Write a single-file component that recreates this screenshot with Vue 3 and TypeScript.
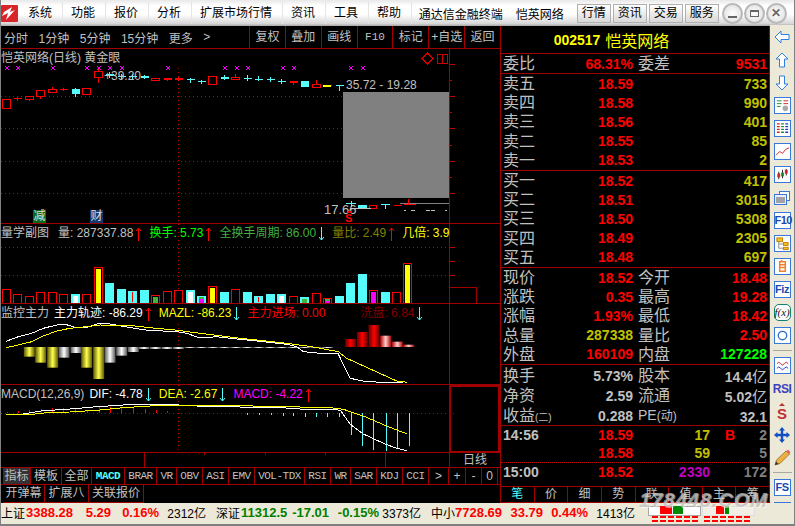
<script setup lang="ts">
type Kind = 'h' | 'r' | 'c'

interface Candle {
  kind: Kind
  top: number
  bottom: number
  high: number
  low: number
}

interface VolBar {
  top: number
  kind: 'h' | 'c'
  inner?: string
  accent?: string
}

const slot = (i: number) => Math.round(6 + i * 11.47) + 0.5

const menus = ['系统', '功能', '报价', '分析', '扩展市场行情', '资讯', '工具', '帮助']
const topTabs = ['行情', '资讯', '交易', '服务']
const periods = ['分时', '1分钟', '5分钟', '15分钟', '更多', '>']
const tools = ['复权', '叠加', '画线', 'F10', '标记', '+自选', '返回']

const raw: [Kind, number, number, number, number][] = [
  ['h', 99.5, 108.5, 99.5, 108.5], ['r', 98, 99, 97, 101], ['h', 96.5, 99.5, 96.5, 101], ['h', 90.5, 96.5, 90.5, 99],
  ['h', 89, 92.5, 87, 93], ['r', 89, 90, 88, 91], ['c', 88.5, 93.5, 87.5, 96.5], ['h', 88, 94, 88, 94],
  ['h', 71.5, 77.5, 69, 82.5], ['c', 74, 76, 71.5, 78], ['c', 76, 77, 74, 79.5], ['c', 76, 77, 74, 78.5],
  ['c', 76, 77.5, 74.5, 79], ['h', 78, 80.5, 78, 80.5], ['r', 78, 79.5, 78, 81], ['r', 78, 79.5, 76.5, 81],
  ['c', 79, 80, 77.5, 82.5], ['c', 81, 82, 80, 83.5], ['h', 76.5, 84.5, 76.5, 84.5], ['c', 76.5, 78.5, 75, 79.5],
  ['h', 77, 79.5, 74, 80], ['c', 77.5, 78.5, 75, 81], ['c', 79, 80, 76, 80.5], ['c', 79, 80, 77, 82],
  ['c', 81, 82, 79, 84], ['r', 81, 82.5, 81, 85], ['c', 81, 86.5, 81, 86.5], ['h', 84.5, 87, 80, 87],
  ['r', 84.5, 85.5, 84.5, 86], ['c', 84.5, 85.5, 84.5, 90.5]
]
const candles = raw.map(([kind, top, bottom, high, low]: [Kind, number, number, number, number], i: number) => ({
  x: slot(i),
  kind,
  top,
  bottom,
  high,
  low
} as Candle & { x: number }))

const crossXs = [7, 18, 53, 87, 99, 110, 122, 168, 225, 237, 248, 283, 294, 351, 363]

const volRaw: VolBar[] = [
  { top: 283, kind: 'h' }, { top: 298, kind: 'h' }, { top: 304, kind: 'h' }, { top: 292, kind: 'h' },
  { top: 292, kind: 'h' }, { top: 298, kind: 'h' }, { top: 298, kind: 'c', inner: '#fff' }, { top: 298, kind: 'h' },
  { top: 217, kind: 'h', inner: '#ff0' }, { top: 264, kind: 'c' }, { top: 282, kind: 'c' }, { top: 288, kind: 'c', inner: '#f00' },
  { top: 285, kind: 'c' }, { top: 301, kind: 'h', inner: '#3fb73f' }, { top: 289, kind: 'h' }, { top: 286, kind: 'h' },
  { top: 286, kind: 'c', inner: '#fff' }, { top: 303, kind: 'c', inner: '#f0f', accent: '#3fb73f' }, { top: 274, kind: 'h', inner: '#ff0' }, { top: 291, kind: 'c' },
  { top: 283, kind: 'h' }, { top: 291, kind: 'c' }, { top: 303, kind: 'c', inner: '#f00' }, { top: 297, kind: 'c' },
  { top: 297, kind: 'c', inner: '#fff' }, { top: 304, kind: 'h' }, { top: 306, kind: 'c', inner: '#3fb73f' }, { top: 295, kind: 'h' },
  { top: 310, kind: 'h', inner: '#f0f', accent: '#3fb73f' }, { top: 303, kind: 'c' }, { top: 264, kind: 'c' }, { top: 237, kind: 'c' },
  { top: 286, kind: 'h', inner: '#f0f' }, { top: 291, kind: 'c' }, { top: 292, kind: 'h' }, { top: 205, kind: 'h', inner: '#ff0' }
]
const volBars = volRaw.map((b: VolBar, i: number) => {
  const y = Math.round(b.top / 3 + 195)
  const thin = b.inner === '#f00'
  return { ...b, x: slot(i), y, h: 303 - y, thin }
})

const toPoints = (pts: number[][], base: number) =>
  pts.map(([x, y]: number[]) => `${(x / 3).toFixed(1)},${(y / 3 + base).toFixed(1)}`).join(' ')

const trackWhite = toPoints([[18, 124], [55, 110], [95, 100], [130, 85], [170, 75], [195, 73], [230, 83], [260, 82], [295, 71], [330, 72], [385, 82], [450, 92], [525, 94], [560, 100], [600, 114], [650, 110], [720, 118], [790, 125], [860, 133], [890, 140], [910, 155], [960, 160], [1015, 162], [1050, 235], [1090, 243], [1140, 247], [1210, 249]], 300)
const trackYellow = toPoints([[18, 143], [55, 135], [95, 125], [130, 108], [170, 93], [210, 85], [260, 80], [300, 75], [385, 76], [450, 83], [525, 90], [600, 100], [720, 115], [790, 122], [860, 130], [935, 140], [1015, 155], [1040, 175], [1190, 243], [1222, 247]], 300)

const flowDown: [number, number, string][] = [
  [88, 170, 'y'], [122, 188, 'y'], [158, 203, 'y'], [192, 173, 'w'], [228, 159, 'w'], [260, 203, 'y'], [296, 237, 'y'], [330, 188, 'w'], [365, 167, 'w'], [400, 156, 'w']
]
const flowBars = flowDown.map(([x, b, c]: [number, number, string]) => ({
  x: x / 3 - 5.5,
  h: b / 3 - 47,
  fill: c === 'y' ? 'url(#goldGrad)' : 'url(#silverGrad)'
}))
const flowThin = Array.from({ length: 17 }, (_: unknown, i: number) => ({ x: 144 + i * 11.47 - 5.5, h: i < 4 ? 2 : 1 }))
const flowUp: [number, number, string][] = [
  [1052, 117, 'r'], [1087, 96, 'r'], [1122, 75, 'r'], [1157, 107, 'p'], [1192, 125, 'p'], [1226, 134, 'p']
]
const flowUpBars = flowUp.map(([x, t, c]: [number, number, string]) => ({
  x: x / 3 - 5.5,
  y: t / 3 + 300,
  h: 47 - t / 3,
  fill: c === 'r' ? 'url(#redGrad)' : 'url(#pinkGrad)'
}))

const difLine = toPoints([[18, 345], [70, 342], [130, 332], [200, 328], [290, 320], [385, 314], [520, 314], [590, 318], [690, 318], [730, 322], [830, 322], [900, 327], [1000, 327], [1022, 332], [1050, 372], [1090, 402], [1155, 432], [1190, 445], [1222, 452]], 300)
const deaLine = toPoints([[18, 342], [105, 342], [140, 338], [210, 336], [300, 330], [370, 323], [450, 318], [590, 316], [830, 319], [1000, 324], [1030, 328], [1090, 348], [1155, 376], [1190, 390], [1222, 402]], 300)
const macdUp = [[20, 335], [54, 333], [88, 330], [122, 327], [156, 325], [190, 325], [225, 325], [260, 330], [296, 322], [330, 320], [364, 320], [400, 322], [435, 326], [468, 330], [502, 334]]
  .map(([x, y]: number[]) => ({ x: Math.round(x / 3) + 0.5, y: Math.round(y / 3 + 300) }))
const macdDown = [[742, 345], [778, 345], [812, 345], [848, 348], [880, 348], [914, 351], [948, 351], [982, 352], [1018, 352], [1052, 405], [1087, 438], [1120, 450], [1157, 452], [1190, 445], [1226, 438]]
  .map(([x, y]: number[]) => ({ x: Math.round(x / 3) + 0.5, y: Math.round(y / 3 + 300) }))

const mainTicks = [64, 80, 96, 112, 128, 145, 161, 177, 193]
const volTicks = [247, 261, 275]

const tabs = [
  { label: '指标', w: 28, cls: 'tab-on' }, { label: '模板', w: 31 }, { label: '全部', w: 30 }, { label: 'MACD', w: 33, cls: 'tab-mono tab-cyan' },
  { label: 'BRAR', w: 32, cls: 'tab-mono' }, { label: 'VR', w: 20, cls: 'tab-mono' }, { label: 'OBV', w: 26, cls: 'tab-mono' }, { label: 'ASI', w: 26, cls: 'tab-mono' },
  { label: 'EMV', w: 26, cls: 'tab-mono' }, { label: 'VOL-TDX', w: 50, cls: 'tab-mono' }, { label: 'RSI', w: 26, cls: 'tab-mono' }, { label: 'WR', w: 20, cls: 'tab-mono' },
  { label: 'SAR', w: 26, cls: 'tab-mono' }, { label: 'KDJ', w: 26, cls: 'tab-mono' }, { label: 'CCI', w: 26, cls: 'tab-mono' }, { label: '>', w: 20 },
  { label: '+', w: 17 }, { label: '-', w: 16 }, { label: '0', w: 16 }
]
const tabs2 = [{ label: '开弹幕', w: 42 }, { label: '扩展八', w: 44 }, { label: '关联报价', w: 55 }]

const sells = [['卖五', '18.59', '733'], ['卖四', '18.58', '990'], ['卖三', '18.56', '401'], ['卖二', '18.55', '85'], ['卖一', '18.53', '2']]
const buys = [['买一', '18.52', '417'], ['买二', '18.51', '3015'], ['买三', '18.50', '5308'], ['买四', '18.49', '2305'], ['买五', '18.48', '697']]

const stats = [
  { a: '现价', b: '18.52', bc: 'red', c: '今开', d: '18.48', dc: 'red' },
  { a: '涨跌', b: '0.35', bc: 'red', c: '最高', d: '19.28', dc: 'red' },
  { a: '涨幅', b: '1.93%', bc: 'red', c: '最低', d: '18.42', dc: 'red' },
  { a: '总量', b: '287338', bc: 'olive', c: '量比', d: '2.50', dc: 'red' },
  { a: '外盘', b: '160109', bc: 'red', c: '内盘', d: '127228', dc: 'green' }
]
const extras = [
  { a: '换手', aSub: '', b: '5.73%', c: '股本', cSub: '', d: '14.4', unit: '亿' },
  { a: '净资', aSub: '', b: '2.59', c: '流通', cSub: '', d: '5.02', unit: '亿' },
  { a: '收益', aSub: '(二)', b: '0.288', c: 'PE', cSub: '(动)', d: '32.1', unit: '' }
]
const quoteTabs = ['笔', '价', '细', '势', '联', '值', '主', '筹']
</script>

<template>
  <div class="window">
    <header class="menubar">
      <svg class="logo" width="17" height="17" viewBox="0 0 17 17">
        <rect width="17" height="17" rx="1" fill="#d8252a" />
        <path d="M1 11 L7 8 L5 15 L14 5 L9 7 L11 2 L3 7 Z" fill="#fff" />
      </svg>
      <span v-for="m in menus" :key="m" class="menu-item">{{ m }}</span>
      <span class="brand">通达信金融终端</span>
      <span class="brand-stock">恺英网络</span>
      <div class="top-tabs">
        <span v-for="t in topTabs" :key="t" class="top-tab">{{ t }}</span>
      </div>
      <div class="win-btns">
        <span class="win-btn"><i class="glyph-min"></i></span>
        <span class="win-btn"><i class="glyph-max"></i></span>
        <span class="win-btn glyph-close">✕</span>
      </div>
    </header>

    <div class="workspace">
      <section class="left">
        <div class="toolbar">
          <div class="periods">
            <span v-for="p in periods" :key="p" class="period">{{ p }}</span>
          </div>
          <span v-for="t in tools" :key="t" class="tool" :class="{ 'tool-mono': t === 'F10' }">{{ t }}</span>
        </div>

        <div class="pane pane-main">
          <div class="plot">
            <div class="pane-title">恺英网络(日线) 黄金眼</div>
            <svg class="canvas" viewBox="1 49 448 174" shape-rendering="crispEdges">
              <line x1="178.5" x2="178.5" y1="68" y2="223" class="dots" />
              <line v-for="y in [96.5, 128.5, 161.5, 193.5]" :key="y" x1="1" x2="343" :y1="y" :y2="y" class="dots" />
              <g v-for="x in crossXs" :key="x" stroke="#f0f">
                <line :x1="x - 2" :x2="x + 2" y1="66" y2="70" />
                <line :x1="x - 2" :x2="x + 2" y1="70" y2="66" />
              </g>
              <g v-for="c in candles" :key="c.x">
                <line :x1="c.x" :x2="c.x" :y1="c.high" :y2="c.low" :stroke="c.kind === 'c' ? '#54fcfc' : '#f00'" />
                <rect
                  :x="c.x - 4"
                  :y="c.top"
                  width="8"
                  :height="c.bottom - c.top"
                  :fill="c.kind === 'h' ? '#000' : c.kind === 'r' ? '#f00' : '#54fcfc'"
                  :stroke="c.kind === 'h' ? '#f00' : 'none'"
                />
              </g>
              <rect x="322.5" y="85" width="8" height="1.5" fill="#ff0" />
              <text x="104" y="80" class="label" fill="#c0c0c0">+39.20</text>
              <text x="346" y="89" class="label" fill="#c0c0c0">35.72 - 19.28</text>
              <rect x="343" y="92" width="106" height="106" fill="#808080" />
              <text x="324" y="214" class="label-lg" fill="#c0c0c0">17.66</text>
              <g stroke="#54fcfc">
                <line x1="346" x2="356" y1="203.5" y2="203.5" />
                <line x1="351.5" x2="351.5" y1="201" y2="207" />
                <line x1="381" x2="390" y1="204.5" y2="204.5" />
                <line x1="385.5" x2="385.5" y1="204" y2="209" />
              </g>
              <rect x="358" y="205" width="9" height="4" fill="#54fcfc" />
              <rect x="369.5" y="205.5" width="7" height="3" fill="none" stroke="#f00" />
              <line x1="400" x2="449" y1="203.5" y2="203.5" stroke="#808080" />
              <line x1="394" x2="402" y1="205.5" y2="205.5" stroke="#f00" />
              <line x1="404" x2="416" y1="204.5" y2="204.5" stroke="#f00" />
              <line x1="408.5" x2="408.5" y1="199" y2="204" stroke="#f00" />
              <line x1="350" x2="371" y1="208.5" y2="208.5" stroke="#c0c0c0" />
              <path d="M404 210.5h2M411 210.5h4M426 210.5h4M431 210.5h4M445 210.5h2" stroke="#c0c0c0" />
              <path d="M349.5 209 L347 213 H352 Z" fill="#f00" />
              <text x="345" y="222" class="sell-mark" fill="#f00">S</text>
              <path d="M422 58.5 L427.5 53 L433 58.5 L427.5 64 Z M437.5 54.5 H447 V63.5 H437.5 Z M442.5 54.5 V63.5" fill="none" stroke="#c00" />
            </svg>
            <span class="news-tag tag-green">减</span>
            <span class="news-tag tag-blue">财</span>
          </div>
          <div class="axis">
            <i v-for="(y, i) in mainTicks" :key="y" class="tick" :class="{ long: i % 2 === 0 }" :style="{ top: y - 49 + 'px' }"></i>
          </div>
        </div>

        <div class="pane pane-vol">
          <div class="plot">
            <div class="pane-title">
              <span class="t-gray">量学副图</span>
              <span class="t-gray gap wide">量: 287337.88</span>
              <svg class="arr up" width="11" height="14" viewBox="0 0 11 14"><path d="M5.5 1 V14 M3 4 L5.5 1 L8 4" /></svg>
              <span class="t-lime gap">换手: 5.73</span>
              <svg class="arr up" width="11" height="14" viewBox="0 0 11 14"><path d="M5.5 1 V14 M3 4 L5.5 1 L8 4" /></svg>
              <span class="t-green gap">全换手周期: 86.00</span>
              <svg class="arr down" width="11" height="14" viewBox="0 0 11 14"><path d="M5.5 0 V13 M3 10 L5.5 13 L8 10" /></svg>
              <span class="t-olive gap">量比: 2.49</span>
              <svg class="arr up" width="11" height="14" viewBox="0 0 11 14"><path d="M5.5 1 V14 M3 4 L5.5 1 L8 4" /></svg>
              <span class="t-yellow gap">几倍: 3.9</span>
            </div>
            <svg class="canvas" viewBox="1 224 448 79" shape-rendering="crispEdges">
              <line x1="178.5" x2="178.5" y1="224" y2="303" class="dots" />
              <line v-for="y in [247.5, 275.5]" :key="y" x1="1" x2="449" :y1="y" :y2="y" class="dots" />
              <g v-for="b in volBars" :key="b.x">
                <rect v-if="b.kind === 'c'" :x="b.x - 4.5" :y="b.y" width="9" :height="b.h" fill="#54fcfc" />
                <rect v-else :x="b.x - 4" :y="b.y + 0.5" width="8" :height="b.h - 0.5" fill="#000" stroke="#f00" />
                <template v-if="b.inner">
                  <line v-if="b.thin" :x1="b.x" :x2="b.x" :y1="b.y + 1" y2="302" stroke="#f00" />
                  <template v-else-if="b.accent">
                    <rect :x="b.x - 2.5" :y="b.y + 1" width="5" height="2" :fill="b.accent" />
                    <rect :x="b.x - 2.5" :y="b.y + 3" width="5" :height="b.h - 3" :fill="b.inner" />
                  </template>
                  <rect v-else :x="b.x - 2.5" :y="b.y + 2" width="5" :height="b.h - 2" :fill="b.inner" />
                </template>
              </g>
            </svg>
          </div>
          <div class="axis">
            <i v-for="y in volTicks" :key="y" class="tick long" :style="{ top: y - 224 + 'px' }"></i>
            <i class="vol-box"></i>
          </div>
        </div>

        <div class="pane pane-monitor">
          <div class="plot">
            <div class="pane-title">
              <span class="t-gray">监控主力</span>
              <span class="t-white gap">主力轨迹: -86.29</span>
              <svg class="arr up" width="11" height="14" viewBox="0 0 11 14"><path d="M5.5 1 V14 M3 4 L5.5 1 L8 4" /></svg>
              <span class="t-yellow gap">MAZL: -86.23</span>
              <svg class="arr down" width="11" height="14" viewBox="0 0 11 14"><path d="M5.5 0 V13 M3 10 L5.5 13 L8 10" /></svg>
              <span class="t-red gap">主力进场: 0.00</span>
              <span class="t-dark gap wash">洗盘: 6.84</span>
              <svg class="arr down" width="11" height="14" viewBox="0 0 11 14"><path d="M5.5 0 V13 M3 10 L5.5 13 L8 10" /></svg>
            </div>
            <svg class="canvas" viewBox="1 304 448 80">
              <defs>
                <linearGradient id="goldGrad"><stop offset="0" stop-color="#5c5800" /><stop offset=".5" stop-color="#ffff50" /><stop offset="1" stop-color="#5c5800" /></linearGradient>
                <linearGradient id="silverGrad"><stop offset="0" stop-color="#555" /><stop offset=".5" stop-color="#fff" /><stop offset="1" stop-color="#555" /></linearGradient>
                <linearGradient id="redGrad"><stop offset="0" stop-color="#600" /><stop offset=".5" stop-color="#f00" /><stop offset="1" stop-color="#600" /></linearGradient>
                <linearGradient id="pinkGrad"><stop offset="0" stop-color="#a00" /><stop offset=".5" stop-color="#fcc" /><stop offset="1" stop-color="#a00" /></linearGradient>
              </defs>
              <line x1="178.5" x2="178.5" y1="324" y2="384" class="dots" shape-rendering="crispEdges" />
              <rect v-for="(b, i) in flowBars" :key="i" :x="b.x" y="347" width="11" :height="b.h" :fill="b.fill" />
              <rect v-for="(b, i) in flowThin" :key="'t' + i" :x="b.x" y="347" width="11" :height="b.h" fill="url(#silverGrad)" />
              <rect v-for="(b, i) in flowUpBars" :key="'u' + i" :x="b.x" :y="b.y" width="11" :height="b.h" :fill="b.fill" />
              <polyline :points="trackWhite" class="curve" stroke="#fff" shape-rendering="crispEdges" />
              <polyline :points="trackYellow" class="curve" stroke="#ff0" shape-rendering="crispEdges" />
            </svg>
          </div>
          <div class="axis"></div>
        </div>

        <div class="pane pane-macd">
          <div class="plot">
            <div class="pane-title">
              <span class="t-gray">MACD(12,26,9)</span>
              <span class="t-white gap">DIF: -4.78</span>
              <svg class="arr down" width="11" height="14" viewBox="0 0 11 14"><path d="M5.5 0 V13 M3 10 L5.5 13 L8 10" /></svg>
              <span class="t-yellow gap">DEA: -2.67</span>
              <svg class="arr down" width="11" height="14" viewBox="0 0 11 14"><path d="M5.5 0 V13 M3 10 L5.5 13 L8 10" /></svg>
              <span class="t-magenta gap">MACD: -4.22</span>
              <svg class="arr up" width="11" height="14" viewBox="0 0 11 14"><path d="M5.5 1 V14 M3 4 L5.5 1 L8 4" /></svg>
            </div>
            <svg class="canvas macd-canvas" viewBox="1 385 448 67" shape-rendering="crispEdges">
              <line x1="178.5" x2="178.5" y1="385" y2="450" class="dots" />
              <line x1="1" x2="455" y1="413.5" y2="413.5" class="dots" />
              <line v-for="m in macdUp" :key="m.x" :x1="m.x" :x2="m.x" :y1="m.y" y2="413" stroke="#f00" />
              <line v-for="m in macdDown" :key="m.x" :x1="m.x" :x2="m.x" y1="413" :y2="m.y" stroke="#54fcfc" />
              <polyline :points="difLine" class="curve" stroke="#fff" />
              <polyline :points="deaLine" class="curve" stroke="#ff0" />
            </svg>
          </div>
          <div class="axis axis-active"></div>
        </div>

        <div class="date-axis">
          <div class="date-track">
            <i style="left: 143px"></i>
            <i class="short" style="left: 203px"></i>
            <i class="short" style="left: 264px"></i>
            <i class="short" style="left: 324px"></i>
            <i style="left: 384px"></i>
          </div>
          <span class="date-unit">日线</span>
        </div>

        <div class="tab-row">
          <span
            v-for="t in tabs"
            :key="t.label"
            class="tab"
            :class="t.cls"
            :style="{ width: t.w + 'px' }"
          >{{ t.label }}</span>
        </div>
        <div class="tab-row tab-row2">
          <span v-for="t in tabs2" :key="t.label" class="tab" :style="{ width: t.w + 'px' }">{{ t.label }}</span>
        </div>
      </section>

      <aside class="quote">
        <div class="q-head"><b>002517</b> <span>恺英网络</span></div>
        <div class="q-sec q-ratio">
          <div class="q-row">
            <span class="cn">委比</span><b class="num red">68.31%</b><span class="cn c2">委差</span><b class="num red">9531</b>
          </div>
        </div>
        <div class="q-sec q-book">
          <div v-for="r in sells" :key="r[0]" class="q-row">
            <span class="cn">{{ r[0] }}</span><b class="num red">{{ r[1] }}</b><span></span><b class="num olive">{{ r[2] }}</b>
          </div>
        </div>
        <div class="q-sec q-book">
          <div v-for="r in buys" :key="r[0]" class="q-row">
            <span class="cn">{{ r[0] }}</span><b class="num red">{{ r[1] }}</b><span></span><b class="num olive">{{ r[2] }}</b>
          </div>
        </div>
        <div class="q-sec q-book">
          <div v-for="r in stats" :key="r.a" class="q-row">
            <span class="cn">{{ r.a }}</span><b class="num" :class="r.bc">{{ r.b }}</b>
            <span class="cn c2">{{ r.c }}</span><b class="num" :class="r.dc">{{ r.d }}</b>
          </div>
        </div>
        <div class="q-sec q-extra">
          <div v-for="r in extras" :key="r.a" class="q-row">
            <span class="cn nowrap">{{ r.a }}<small class="sub-a">{{ r.aSub }}</small></span><b class="num gray">{{ r.b }}</b>
            <span class="cn c2 nowrap" :class="{ 'pe-label': r.c === 'PE' }">{{ r.c }}<small class="sub-c">{{ r.cSub }}</small></span><b class="num gray">{{ r.d }}<span class="cn unit">{{ r.unit }}</span></b>
          </div>
        </div>
        <div class="q-ticks">
          <div class="tick-row"><b class="gray t-time">14:56</b><b class="red t-price">18.59</b><b class="olive t-vol">17</b><b class="red t-side">B</b><b class="dim t-n">2</b></div>
          <div class="tick-row tick-dotted"><b class="t-time"></b><b class="red t-price">18.58</b><b class="olive t-vol">59</b><b class="t-side"></b><b class="dim t-n">5</b></div>
          <div class="tick-row"><b class="gray t-time">15:00</b><b class="red t-price">18.52</b><b class="purple t-vol">2330</b><b class="t-side"></b><b class="dim t-n">172</b></div>
        </div>
        <div class="q-tabs">
          <span v-for="(t, i) in quoteTabs" :key="t" class="q-tab" :class="{ active: i === 0 }">{{ t }}</span>
        </div>
      </aside>

      <nav class="side">
        <span class="ic"><svg width="16" height="14" viewBox="0 0 16 14"><path d="M1 7 L7 1 V4.5 H15 V9.5 H7 V13 Z" fill="#fff" stroke="#2f7fe0" /></svg></span>
        <span class="ic"><svg width="14" height="16" viewBox="0 0 14 16"><path d="M7 1 L13 7 H9.5 V15 H4.5 V7 H1 Z" fill="#fff" stroke="#2f7fe0" /></svg></span>
        <span class="ic"><svg width="14" height="16" viewBox="0 0 14 16"><path d="M7 15 L13 9 H9.5 V1 H4.5 V9 H1 Z" fill="#fff" stroke="#2f7fe0" /></svg></span>
        <span class="ic"><svg class="box" width="16" height="16" viewBox="0 0 16 16"><path d="M2 3H7M2 6H7M2 9H6" stroke="#1a8a30" /><path d="M9 3H14M9 6H14" stroke="#d02020" /><circle cx="11" cy="11" r="3" fill="#aaa" /></svg></span>
        <span class="ic"><svg class="box" width="16" height="16" viewBox="0 0 16 16"><path d="M2 3H5M2 6H5M2 9H5M2 12H5" stroke="#d02020" stroke-width="1.4" /><path d="M6.5 3H9.5M6.5 6H9.5M6.5 9H9.5M6.5 12H9.5" stroke="#1a8a30" stroke-width="1.4" /><path d="M11 3H14M11 6H14M11 9H14M11 12H14" stroke="#1a3ad0" stroke-width="1.4" /></svg></span>
        <span class="ic"><svg class="box" width="16" height="16" viewBox="0 0 16 16"><path d="M1 12 L5 8 L8 10 L11 6 L15 4" fill="none" stroke="#d02020" /></svg></span>
        <span class="ic"><svg class="box" width="16" height="16" viewBox="0 0 16 16"><path d="M4 5V13M8 3V12M12 2V9" stroke="#222" /><rect x="2.5" y="7" width="3" height="4" fill="#d02020" /><rect x="6.5" y="6" width="3" height="4" fill="#1a8a30" /><rect x="10.5" y="3" width="3" height="4" fill="#d02020" /></svg></span>
        <span class="ic"><svg width="16" height="16" viewBox="0 0 16 16"><rect x="5.5" y="1.5" width="10" height="9" fill="#fff" stroke="#3a78d8" /><rect x="0.5" y="4.5" width="12" height="10" fill="#eef" stroke="#3a78d8" /><path d="M2 8H11M2 10H11M2 12H11" stroke="#555" /></svg></span>
        <span class="ic"><span class="box txt-ic">F10</span></span>
        <span class="ic"><svg class="box" width="16" height="16" viewBox="0 0 16 16"><rect x="2" y="2" width="6" height="4" fill="#f0c020" stroke="#c08000" /><rect x="9" y="7" width="5" height="3" fill="#f0c020" stroke="#c08000" /><rect x="9" y="12" width="5" height="2.5" fill="#f0c020" stroke="#c08000" /><path d="M4 6V13H9M4 8.5H9" fill="none" stroke="#888" /></svg></span>
        <span class="ic"><svg class="box" width="16" height="16" viewBox="0 0 16 16"><path d="M5 3H11V13H5ZM5 6H11M5 9H11M7 1V3" fill="none" stroke="#f08030" stroke-width="1.6" /></svg></span>
        <span class="ic"><span class="box txt-ic">Fiz</span></span>
        <span class="ic"><span class="box box-teal txt-fx">f(x)</span></span>
        <span class="ic"><svg class="box" width="16" height="16" viewBox="0 0 16 16"><circle cx="8" cy="8" r="4.5" fill="none" stroke="#2f6fd0" stroke-width="1.4" /></svg></span>
        <i class="side-sep"></i>
        <span class="ic"><svg class="box" width="16" height="16" viewBox="0 0 16 16"><path d="M2 6 Q4 3 6 6 T10 6 T14 6" fill="none" stroke="#d02020" /><path d="M2 11 Q4 8 6 11 T10 11 T14 11" fill="none" stroke="#2030d0" /></svg></span>
        <span class="ic"><b class="rsi">RSI</b></span>
        <span class="ic ic-s-wrap"><b class="ic-s">S</b></span>
        <span class="ic"><svg width="18" height="18" viewBox="0 0 18 18"><path d="M9 1 L12 4.5 H10.2 V7.8 H13.5 V6 L17 9 L13.5 12 V10.2 H10.2 V13.5 H12 L9 17 L6 13.5 H7.8 V10.2 H4.5 V12 L1 9 L4.5 6 V7.8 H7.8 V4.5 H6 Z" fill="#1050c0" /></svg></span>
        <span class="ic"><svg width="17" height="17" viewBox="0 0 17 17"><path d="M1 16 L2.5 11 L12 2 L15.5 5 L6 14.5 Z" fill="#f0b040" stroke="#806020" stroke-width=".7" /><path d="M12 2 L14 0.8 L16.4 3 L15.5 5 Z" fill="#e06070" /><path d="M1 16 L2 12.5 L4.5 15 Z" fill="#333" /></svg></span>
        <i class="side-sep"></i>
        <span class="ic"><span class="box txt-ic">FS</span></span>
        <span class="ic"><svg class="box" width="16" height="16" viewBox="0 0 16 16"><path d="M3 8 A5 5 0 0 1 12 5 L13.5 3.5 V8 H9 L11 6 A3.5 3.5 0 0 0 5 8 Z" fill="#38a838" /><path d="M13 9 A5 5 0 0 1 4 12 L2.5 13.5 V9 H7 L5 11 A3.5 3.5 0 0 0 11 9 Z" fill="#60b860" /></svg></span>
      </nav>
    </div>

    <footer class="status">
      <span class="s-cn" style="width: 25px">上证</span>
      <b class="s-num red" style="width: 49px">3388.28</b>
      <b class="s-num red s-right" style="width: 36px">5.29</b>
      <b class="s-num red s-right" style="width: 48px">0.16%</b>
      <span class="s-amt" style="width: 47px">2312亿</span>
      <span class="s-cn" style="width: 25px">深证</span>
      <b class="s-num dkgreen" style="width: 47px">11312.5</b>
      <b class="s-num dkgreen s-right" style="width: 41px">-17.01</b>
      <b class="s-num dkgreen s-right" style="width: 50px">-0.15%</b>
      <span class="s-amt" style="width: 42px">3373亿</span>
      <span class="s-cn" style="width: 24px">中小</span>
      <b class="s-num red" style="width: 49px">7728.69</b>
      <b class="s-num red s-right" style="width: 39px">33.79</b>
      <b class="s-num red s-right" style="width: 45px">0.44%</b>
      <span class="s-amt" style="width: 47px">1413亿</span>
      <svg class="meter" width="120" height="21" viewBox="0 0 120 21" shape-rendering="crispEdges">
        <rect x="3.5" y="4.5" width="52" height="9" fill="#fff" stroke="#aaa" />
        <rect x="57.5" y="4.5" width="52" height="9" fill="#f2f0e6" stroke="#ddd" />
        <rect x="15" y="4" width="12" height="8" fill="#f00" />
        <rect x="28" y="4" width="10" height="8" fill="#080" />
        <rect x="71" y="4" width="8" height="8" fill="#f00" />
        <rect x="80" y="4" width="4" height="8" fill="#080" />
        <path d="M7 14.5H53M7 18.5H53M59 14.5H105M59 18.5H105" stroke="#f00" stroke-width="2" stroke-dasharray="6 2" />
      </svg>
    </footer>
    <div class="watermark">178448.COM</div>
  </div>
</template>

<style>
html,
body {
  margin: 0;
  background: #000;
}
</style>

<style scoped>
.window {
  position: relative;
  width: 795px;
  height: 526px;
  box-sizing: border-box;
  overflow: hidden;
  display: flex;
  flex-direction: column;
  background: #ece9d8;
  border-left: 1px solid #808080;
  border-right: 1px solid #808080;
  font-family: "Liberation Sans", "Noto Sans CJK SC", sans-serif;
  font-size: 12px;
  color: #c0c0c0;
}
.menubar {
  height: 26px;
  flex: none;
  display: flex;
  align-items: center;
  color: #000;
  background: linear-gradient(#e8e8e8, #fff 22%, #fff 55%, #d8d8d8 90%, #a8a8a8);
  box-sizing: border-box;
}
.logo {
  width: 17px;
  margin: 0 0.5px 0 0;
  flex: none;
}
.menu-item {
  padding: 0 9.5px;
  border-right: 1px solid #e4e4e4;
  margin-right: -1px;
  line-height: 22px;
}
.brand {
  margin-left: 8px;
}
.brand-stock {
  margin-left: 13px;
}
.top-tabs {
  display: flex;
  gap: 2px;
  margin-left: 13px;
}
.top-tab {
  width: 32px;
  height: 17px;
  line-height: 17px;
  text-align: center;
  border: 1px solid #b0b0b0;
  background: linear-gradient(#fff, #d8d8d8);
}
.win-btns {
  display: flex;
  gap: 1px;
  margin-left: 3px;
}
.win-btn {
  width: 21px;
  height: 21px;
  box-sizing: border-box;
  border-radius: 50%;
  border: 2px solid #b8b8b8;
  background: radial-gradient(circle, #fff, #dcdcdc);
  display: flex;
  align-items: center;
  justify-content: center;
  position: relative;
}
.glyph-min {
  width: 9px;
  height: 2px;
  background: #666;
  margin-top: 8px;
}
.glyph-max {
  width: 9px;
  height: 7px;
  box-sizing: border-box;
  border: 1px solid #666;
  border-top-width: 2px;
}
.glyph-close {
  font-size: 12px;
  font-weight: bold;
  color: #666;
}
.workspace {
  flex: 1;
  min-height: 0;
  display: flex;
  background: #000;
}
.left {
  width: 499px;
  flex: none;
  display: flex;
  flex-direction: column;
  background: #000;
}
.toolbar {
  height: 23px;
  flex: none;
  box-sizing: border-box;
  display: flex;
  border-bottom: 1px solid #a00000;
}
.periods {
  width: 248px;
  flex: none;
  display: flex;
  align-items: center;
  padding-left: 3px;
  box-sizing: border-box;
  gap: 10.5px;
}
.period {
  white-space: nowrap;
}
.tool {
  width: 36px;
  box-sizing: border-box;
  border-left: 1px solid #a00000;
  text-align: center;
  line-height: 22px;
  white-space: nowrap;
}
.tool-mono {
  font-family: "Liberation Mono", monospace;
  font-size: 11px;
}
.pane {
  flex: none;
  display: flex;
  box-sizing: border-box;
  border-bottom: 1px solid #a00000;
}
.pane-main {
  height: 175px;
}
.pane-vol {
  height: 80px;
}
.pane-monitor {
  height: 81px;
}
.pane-macd {
  height: 68px;
}
.plot {
  position: relative;
  width: 448px;
  flex: none;
}
.canvas {
  position: absolute;
  inset: 0;
  width: 100%;
  height: 100%;
  overflow: hidden;
}
.macd-canvas {
  overflow: visible;
}
.pane-title {
  position: relative;
  z-index: 1;
  display: flex;
  align-items: center;
  padding: 2px 0 0 0;
  line-height: 15px;
  white-space: pre;
}
.gap {
  margin-left: 5px;
}
.wide {
  margin-left: 9px;
}
.wash {
  margin-left: 35px;
}
.arr {
  flex: none;
  fill: none;
}
.arr.up {
  stroke: #f00;
}
.arr.down {
  stroke: #54fcfc;
}
.t-gray {
  color: #c0c0c0;
}
.t-white {
  color: #fff;
}
.t-lime {
  color: #00ff00;
}
.t-green {
  color: #40b040;
}
.t-olive {
  color: #808000;
}
.t-yellow {
  color: #ff0;
}
.t-red {
  color: #f00;
}
.t-dark {
  color: #800000;
}
.t-magenta {
  color: #f0f;
}
.label {
  font-size: 12px;
}
.label-lg {
  font-size: 13px;
}
.sell-mark {
  font-size: 11px;
  font-weight: bold;
}
.dots {
  stroke: #c00000;
  stroke-dasharray: 1 3;
  fill: none;
}
.curve {
  fill: none;
}
.news-tag {
  position: absolute;
  top: 161px;
  width: 13px;
  height: 13px;
  line-height: 13px;
  text-align: center;
  color: #ddd;
}
.tag-green {
  left: 32px;
  background: #0a6a20;
}
.tag-blue {
  left: 89px;
  background: #103a70;
}
.axis {
  position: relative;
  flex: 1;
  border-left: 1px solid #a00000;
}
.axis-active {
  border: 2px solid #a00000;
  margin-bottom: -1px;
}
.tick {
  position: absolute;
  left: 0;
  width: 2px;
  height: 1px;
  background: #c00000;
}
.tick.long {
  width: 5px;
}
.vol-box {
  position: absolute;
  left: 0;
  bottom: 0;
  width: 26px;
  height: 15px;
  border: 1px solid #a00000;
  border-bottom: none;
  border-left: none;
}
.date-axis {
  height: 15px;
  flex: none;
  display: flex;
  box-sizing: border-box;
  border-bottom: 1px solid #a00000;
}
.date-track {
  position: relative;
  width: 448px;
  flex: none;
}
.date-track i {
  position: absolute;
  top: 0;
  width: 1px;
  height: 100%;
  background: #a00000;
}
.date-track i.short {
  height: 2px;
}
.date-unit {
  flex: 1;
  border-left: 1px solid #a00000;
  text-align: center;
  line-height: 15px;
}
.tab-row {
  height: 17px;
  flex: none;
  display: flex;
  box-sizing: border-box;
  padding-left: 2px;
  border-bottom: 1px solid #a00000;
}
.tab-row2 {
  height: 18px;
  border-bottom: none;
}
.tab {
  box-sizing: border-box;
  border-right: 1px solid #a00000;
  text-align: center;
  line-height: 16px;
  white-space: nowrap;
}
.tab-row2 .tab {
  border-bottom: 1px solid #a00000;
}
.tab-on {
  background: #333;
}
.tab-mono {
  font-family: "Liberation Mono", monospace;
  font-size: 11px;
  letter-spacing: -0.5px;
}
.tab-cyan {
  color: #54fcfc;
  font-weight: bold;
}
.quote {
  width: 270px;
  flex: none;
  box-sizing: border-box;
  display: flex;
  flex-direction: column;
  background: #000;
  border-left: 1px solid #a00000;
  border-right: 1px solid #a00000;
}
.q-head {
  height: 28px;
  flex: none;
  box-sizing: border-box;
  border-bottom: 1px solid #a00000;
  color: #ff0;
  display: flex;
  align-items: center;
  justify-content: center;
  gap: 5px;
  padding-right: 47px;
}
.q-head b {
  font-size: 14px;
}
.q-head span {
  font-size: 16px;
}
.q-sec {
  flex: none;
  box-sizing: border-box;
  border-bottom: 1px solid #a00000;
  display: flex;
  flex-direction: column;
  justify-content: space-around;
}
.q-ratio {
  height: 20px;
}
.q-book {
  height: 97px;
}
.q-extra {
  height: 61px;
}
.q-row {
  display: grid;
  grid-template-columns: 40px 90px 46px 1fr;
  padding: 0 2px;
  align-items: center;
  height: 19px;
}
.cn {
  font-size: 16px;
  font-weight: normal;
  color: #c0c0c0;
  line-height: 19px;
}
.c2 {
  padding-left: 5px;
}
.nowrap {
  white-space: nowrap;
}
.sub-a {
  font-size: 10px;
}
.sub-c {
  font-size: 12px;
}
.pe-label {
  font-size: 14px;
}
.num {
  font-size: 14px;
  text-align: right;
}
.unit {
  font-size: 15px;
}
.red {
  color: #f00;
}
.olive {
  color: #c0c000;
}
.green {
  color: #00ff00;
}
.gray {
  color: #c0c0c0;
}
.dim {
  color: #808080;
}
.purple {
  color: #c000c0;
}
.dkgreen {
  color: #008000;
}
.q-ticks {
  height: 60px;
  flex: none;
  box-sizing: border-box;
}
.tick-row {
  display: flex;
  height: 18px;
  line-height: 18px;
  font-size: 14px;
  padding: 0 2px;
}
.tick-dotted {
  border-bottom: 1px dotted #c00000;
}
.t-time {
  width: 40px;
}
.t-price {
  width: 90px;
  text-align: right;
}
.t-vol {
  width: 77px;
  text-align: right;
}
.t-side {
  width: 25px;
  text-align: right;
}
.t-n {
  flex: 1;
  text-align: right;
}
.q-tabs {
  height: 17px;
  flex: none;
  display: flex;
  box-sizing: border-box;
  border-top: 1px solid #a00000;
  border-bottom: 1px solid #a00000;
}
.q-tab {
  flex: 1;
  text-align: center;
  line-height: 15px;
  border-right: 1px solid #a00000;
}
.q-tab:last-child {
  border-right: none;
}
.q-tab.active {
  color: #54fcfc;
}
.side {
  flex: 1;
  display: flex;
  flex-direction: column;
  align-items: center;
  margin-top: -1px;
  background: #ece9d8;
}
.ic {
  height: 23px;
  flex: none;
  display: flex;
  align-items: center;
  justify-content: center;
}
.box {
  box-sizing: border-box;
  width: 17px;
  height: 17px;
  border: 1px solid #3a78d8;
  background: #fff;
}
.box-teal {
  border-color: #108070;
  border-radius: 5px;
}
.txt-ic {
  color: #1a4ab0;
  font-size: 11px;
  font-weight: bold;
  line-height: 15px;
  text-align: center;
  letter-spacing: -0.5px;
}
.txt-fx {
  color: #111;
  font-family: "Liberation Serif", serif;
  font-style: italic;
  font-size: 11px;
  line-height: 15px;
  text-align: center;
}
.rsi {
  font-size: 12px;
  color: #3a40c0;
  letter-spacing: -0.5px;
}
.ic-s-wrap {
  flex-direction: column;
}
.ic-s-wrap::before {
  content: "";
  border: 3px solid transparent;
  border-top: none;
  border-bottom: 3px solid #c03030;
}
.ic-s {
  font-size: 15px;
  line-height: 15px;
  color: #c03030;
}
.side-sep {
  flex: none;
  width: 19px;
  height: 7px;
  margin: 0;
  background: linear-gradient(transparent 3px, #a8a8a0 3px, #a8a8a0 4px, transparent 4px);
}
.status {
  height: 23px;
  flex: none;
  box-sizing: border-box;
  display: flex;
  align-items: center;
  padding-bottom: 2px;
  background: #ece9d8;
  border-bottom: 2px solid #808080;
  color: #000;
  white-space: nowrap;
}
.s-cn {
  flex: none;
  font-size: 12px;
}
.s-num {
  flex: none;
  font-size: 13px;
}
.s-right {
  text-align: right;
}
.s-amt {
  flex: none;
  text-align: right;
  margin-right: 10px;
}
.meter {
  flex: none;
}
.watermark {
  position: absolute;
  right: 26px;
  bottom: 14px;
  font-size: 20px;
  font-weight: bold;
  font-style: italic;
  color: rgba(190, 190, 190, 0.75);
  text-shadow: 1px 1px 0 rgba(255, 255, 255, 0.5);
  letter-spacing: 1px;
}
</style>
